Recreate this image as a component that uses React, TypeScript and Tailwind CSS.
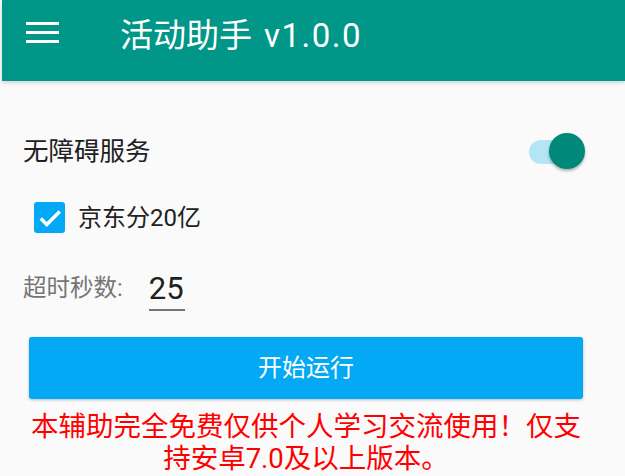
import React from 'react';

const font = { fontFamily: 'Roboto, "Noto Sans CJK SC", "Noto Sans", sans-serif' };

function MenuIcon() {
    return (
        <div className="flex flex-col gap-[6px] w-[33px]">
            <span className="block h-[3px] w-full bg-white" />
            <span className="block h-[3px] w-full bg-white" />
            <span className="block h-[3px] w-full bg-white" />
        </div>
    );
}

export default function App() {
    return (
        <div className="w-[625px] h-[476px] overflow-hidden bg-[#fafafa]" style={font}>
            {/* Toolbar */}
            <header className="ml-[2px] h-[81px] bg-[#009688] flex items-center shadow-[0_2px_4px_rgba(0,0,0,0.15)]">
                <div className="pl-[24px] pb-[16px]">
                    <MenuIcon />
                </div>
                <h1 className="ml-[61px] text-white text-[33px] leading-none pb-[10px]">
                    活动助手<span className="ml-[12px] tracking-[1.5px]">v1.0.0</span>
                </h1>
            </header>

            <main className="px-[23px]">
                {/* Accessibility switch */}
                <div className="mt-[52px] h-[38px] flex items-center justify-between">
                    <span className="text-[25.5px] text-[#212121] leading-none">无障碍服务</span>
                    <div className="relative w-[56px] h-[36px] mr-[17px] flex items-center">
                        <div className="h-[24px] w-[46px] rounded-full bg-[#b3e5f5]" />
                        <div className="absolute right-0 top-[-1px] w-[36px] h-[36px] rounded-full bg-[#00897b] shadow-[0_2px_3px_rgba(0,0,0,0.3)]" />
                    </div>
                </div>

                {/* Checkbox */}
                <div className="mt-[31px] ml-[11px] flex items-center gap-[13px]">
                    <div className="w-[31px] h-[31px] rounded-[3px] bg-[#03a9f4] flex items-center justify-center">
                        <svg width="26" height="26" viewBox="0 0 24 24">
                            <path d="M3.5 12.5l5.5 5.5L21 6" fill="none" stroke="white" strokeWidth="3.2" />
                        </svg>
                    </div>
                    <span className="text-[24px] text-[#212121] leading-none">京东分20亿</span>
                </div>

                {/* Timeout */}
                <div className="mt-[40px] flex items-end">
                    <span className="text-[23.5px] text-[#757575] leading-none pb-[11px]">超时秒数:</span>
                    <div className="ml-[26px] w-[36px] border-b-2 border-[#757575] pb-[5px]">
                        <span className="text-[31px] text-[#212121] leading-none block">25</span>
                    </div>
                </div>

                {/* Start button */}
                <button className="mt-[26px] ml-[6px] w-[554px] h-[62px] rounded-[3px] bg-[#03a9f4] text-white text-[24px] shadow-[0_1px_3px_rgba(0,0,0,0.25)]">
                    开始运行
                </button>

                <p className="mt-[12px] ml-[6px] w-[554px] text-center text-[#ff0000] text-[27.5px] leading-[32px]">
                    本辅助完全免费仅供个人学习交流使用！仅支持安卓7.0及以上版本。
                </p>
            </main>
        </div>
    );
}
